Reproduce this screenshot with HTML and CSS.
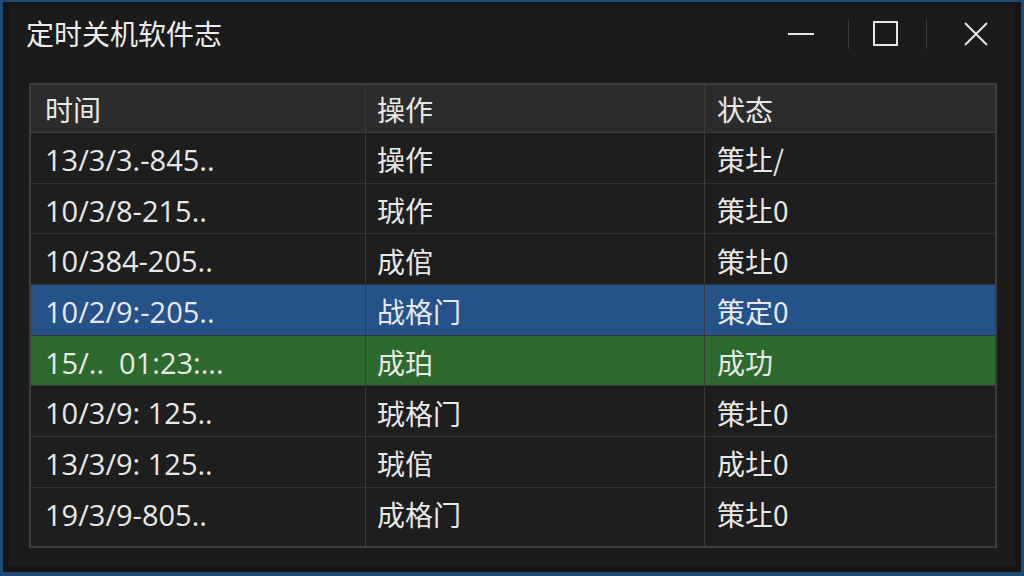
FILE: index.html
```html
<!DOCTYPE html>
<html lang="zh">
<head>
<meta charset="utf-8">
<title>定时关机软件志</title>
<link rel="stylesheet" href="styles.css">
</head>
<body>
<div class="window">
  <div class="titlebar">
    <div class="title">定时关机软件志</div>
    <div class="controls">
      <svg class="ctl ctl-min" width="26" height="26" viewBox="0 0 26 26"><line x1="0" y1="13" x2="26" y2="13" stroke="#e6e6e6" stroke-width="2"/></svg>
      <span class="sep sep1"></span>
      <svg class="ctl ctl-max" width="26" height="26" viewBox="0 0 26 26"><rect x="1" y="1" width="23" height="23" fill="none" stroke="#e6e6e6" stroke-width="2"/></svg>
      <span class="sep sep2"></span>
      <svg class="ctl ctl-close" width="24" height="24" viewBox="0 0 24 24"><path d="M1 1 L23 23 M23 1 L1 23" stroke="#e6e6e6" stroke-width="2" fill="none"/></svg>
    </div>
  </div>
  <div class="table">
    <div class="row head">
      <div class="cell c1">时间</div>
      <div class="cell c2">操作</div>
      <div class="cell c3">状态</div>
    </div>
    <div class="row">
      <div class="cell c1">13/3/3.-845..</div>
      <div class="cell c2">操作</div>
      <div class="cell c3">策圵/</div>
    </div>
    <div class="row">
      <div class="cell c1">10/3/8-215..</div>
      <div class="cell c2">珬作</div>
      <div class="cell c3">策圵0</div>
    </div>
    <div class="row">
      <div class="cell c1">10/384-205..</div>
      <div class="cell c2">成倌</div>
      <div class="cell c3">策圵0</div>
    </div>
    <div class="row sel-blue">
      <div class="cell c1">10/2/9:-205..</div>
      <div class="cell c2">战格门</div>
      <div class="cell c3">策定0</div>
    </div>
    <div class="row sel-green">
      <div class="cell c1">15/..&nbsp; 01:23:...</div>
      <div class="cell c2">成珀</div>
      <div class="cell c3">成功</div>
    </div>
    <div class="row">
      <div class="cell c1">10/3/9: 125..</div>
      <div class="cell c2">珬格门</div>
      <div class="cell c3">策圵0</div>
    </div>
    <div class="row">
      <div class="cell c1">13/3/9: 125..</div>
      <div class="cell c2">珬倌</div>
      <div class="cell c3">成圵0</div>
    </div>
    <div class="row last">
      <div class="cell c1">19/3/9-805..</div>
      <div class="cell c2">成格门</div>
      <div class="cell c3">策圵0</div>
    </div>
    <div class="filler">
      <div class="fcell c1"></div>
      <div class="fcell c2"></div>
      <div class="fcell c3"></div>
    </div>
  </div>
</div>
</body>
</html>
```

FILE: styles.css
```css
html, body {
  margin: 0;
  padding: 0;
  background: #1b1b1b;
}
body {
  font-family: "Open Sans", "Noto Sans CJK SC", sans-serif;
  color: #e8e8e8;
}
.window {
  box-sizing: border-box;
  width: 1024px;
  height: 576px;
  border: 3px solid #1f4a73;
  border-top-width: 2px;
  border-bottom-width: 4px;
  background: #1b1b1b;
  box-shadow: inset 0 0 0 6px #151515;
  display: flex;
  flex-direction: column;
}
.titlebar {
  height: 64px;
  display: flex;
  align-items: center;
  justify-content: space-between;
  padding: 0 33px 0 23px;
}
.title {
  font-family: "Noto Sans CJK SC", sans-serif;
  font-size: 28px;
  line-height: 32px;
  color: #ececec;
  margin-top: -2px;
}
.controls {
  display: flex;
  align-items: center;
}
.ctl { display: block; }
.sep {
  display: block;
  width: 1px;
  height: 30px;
  background: #3a3a3a;
}
.sep1 { margin: 0 24px 0 34px; }
.sep2 { margin: 0 37px 0 27px; }
.table {
  margin: 17px 24px 0 26px;
  border: 2px solid #3d3d3d;
  background: #1e1e1e;
  display: flex;
  flex-direction: column;
}
.row {
  display: grid;
  grid-template-columns: 335px 339px 1fr;
  height: 49.7px;
  border-bottom: 1px solid #333333;
}
.row.head {
  background: #2c2c2c;
  height: 47px;
  border-bottom: 1px solid #3f3f3f;
}
.row.last { border-bottom: none; }
.cell {
  box-sizing: border-box;
  display: flex;
  align-items: center;
  font-size: 29px;
  white-space: nowrap;
  overflow: hidden;
  padding-top: 3px;
}
.head .cell { padding-top: 0; }
.c1 { padding-left: 14px; border-right: 1px solid #3a3a3a; }
.c2 { padding-left: 11px; border-right: 1px solid #3a3a3a; }
.c3 { padding-left: 12px; }
.cell.c2, .cell.c3, .head .cell {
  font-family: "Noto Sans CJK SC", sans-serif;
  font-size: 28px;
}
.sel-blue { background: #26528a; }
.sel-green { background: #2d6a2e; }
.filler {
  display: grid;
  grid-template-columns: 335px 339px 1fr;
  height: 8px;
}
.fcell.c1, .fcell.c2 { border-right: 1px solid #3a3a3a; padding: 0; }
.fcell.c3 { padding: 0; }
```
